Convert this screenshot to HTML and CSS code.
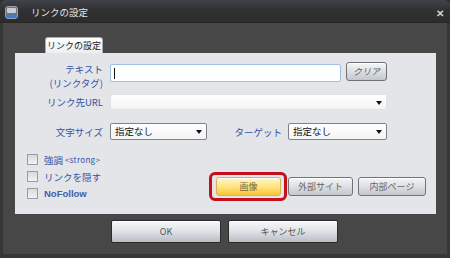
FILE: index.html
```html
<!DOCTYPE html>
<html lang="ja">
  <head>
    <meta charset="UTF-8" />
    <title>リンクの設定</title>
    <link rel="stylesheet" href="styles.css">
  </head>
  <body>
    <div class="dialog">
      <div class="titlebar">
        <svg class="app-icon" width="13" height="13" viewBox="0 0 13 13">
          <rect x="0.5" y="0.5" width="12" height="12" rx="2.5" fill="#6d737b" stroke="#9aa0a8" />
          <rect x="2" y="2" width="9" height="5" rx="1" fill="#c9ced4" />
          <path d="M1 9.5 Q6.5 7 12 9.5 L12 11 Q12 12 11 12 L2 12 Q1 12 1 11 Z" fill="#3b7fd1" />
        </svg>
        <span class="title">リンクの設定</span>
        <span class="close">&#x2715;</span>
      </div>
      <div class="dialog-body">
        <div class="tabs">
          <div class="tab">リンクの設定</div>
        </div>
        <div class="panel">
          <div class="row row-text">
            <label class="label label-two">テキスト<br>(リンクタグ)</label>
            <div class="input focused"><span class="caret"></span></div>
            <button class="btn btn-clear">クリア</button>
          </div>
          <div class="row row-url">
            <label class="label">リンク先URL</label>
            <div class="select select-url"><span class="arrow"></span></div>
          </div>
          <div class="row row-opts">
            <label class="label">文字サイズ</label>
            <div class="select select-small">指定なし<span class="arrow"></span></div>
            <label class="label label-target">ターゲット</label>
            <div class="select select-small select-target">指定なし<span class="arrow"></span></div>
          </div>
          <div class="bottom">
            <div class="checks">
              <div class="check"><span class="box"></span>強調<small>&lt;strong&gt;</small></div>
              <div class="check"><span class="box"></span>リンクを隠す</div>
              <div class="check check-latin"><span class="box"></span>NoFollow</div>
            </div>
            <div class="kinds">
              <div class="highlight"><button class="btn btn-kind active">画像</button></div>
              <button class="btn btn-kind">外部サイト</button>
              <button class="btn btn-kind btn-page">内部ページ</button>
            </div>
          </div>
        </div>
        <div class="actions">
          <button class="btn-big">OK</button>
          <button class="btn-big">キャンセル</button>
        </div>
      </div>
    </div>
  </body>
</html>
```

FILE: styles.css
```css
body {
  margin: 0;
  background-color: #2e2e2e;
  font-family: "Noto Sans CJK JP", "Noto Sans", sans-serif;
  font-size: 10px;
}
.dialog {
  width: 450px;
  height: 258px;
  box-sizing: border-box;
  background-color: #474747;
  border: 3px solid #373737;
  border-top: none;
  border-bottom-width: 4px;
  border-radius: 6px 6px 0 0;
  display: flex;
  flex-direction: column;
}
.titlebar {
  height: 22px;
  margin: 0 -3px;
  padding: 0 6px 0 5px;
  display: flex;
  align-items: center;
  background: linear-gradient(#40434a, #303133 45%, #2c2c2c);
  border-radius: 6px 6px 0 0;
  border-bottom: 1px solid #262626;
}
.app-icon {
  display: block;
  margin-top: 2px;
}
.title {
  margin-left: 13px;
  margin-top: 2px;
  color: #e4e4e4;
  font-size: 9.5px;
  line-height: 22px;
}
.close {
  margin-left: auto;
  margin-top: 2px;
  color: #cfd3d8;
  font-size: 10px;
  font-weight: bold;
}
.dialog-body {
  flex: 1;
  padding: 14px 6px 0 12px;
  display: flex;
  flex-direction: column;
}
.tabs {
  display: flex;
  padding-left: 30px;
}
.tab {
  width: 58px;
  height: 16px;
  box-sizing: border-box;
  padding-top: 1px;
  text-align: center;
  white-space: nowrap;
  color: #222;
  font-size: 9px;
  line-height: 14px;
  background: linear-gradient(#ffffff, #eceef0);
  border: 1px solid #a8acb2;
  border-bottom: none;
  border-radius: 3px 3px 0 0;
}
.panel {
  width: 421px;
  height: 161px;
  box-sizing: border-box;
  padding: 9px 10px 0 0;
  background-color: #e3e5e8;
}
.row {
  display: flex;
  align-items: center;
}
.label {
  width: 88px;
  text-align: right;
  white-space: nowrap;
  color: #3352a6;
  font-size: 9.5px;
  line-height: 14px;
  margin-right: 7px;
}
.row-text {
  height: 26px;
  align-items: flex-start;
}
.label-two {
  margin-top: 0;
  line-height: 14px;
}
.input {
  width: 231px;
  height: 18px;
  margin-top: 2px;
  box-sizing: border-box;
  background-color: #fff;
  border: 1px solid #c8d0da;
  border-radius: 2px;
}
.input.focused {
  border-color: #9fbddc;
}
.caret {
  display: block;
  width: 1px;
  height: 11px;
  margin: 3px 0 0 3px;
  background-color: #111;
}
.btn {
  font-family: inherit;
  font-size: 9px;
  color: #666;
  height: 19px;
  padding: 0;
  white-space: nowrap;
  background: linear-gradient(#f4f5f7, #dadde2 55%, #c3c8ce);
  border: 1px solid #6f7378;
  border-radius: 3px;
  box-shadow: inset 0 1px 0 #fff;
}
.btn-clear {
  width: 41px;
  margin-left: 5px;
  color: #59606a;
  font-style: italic;
}
.row-url {
  margin-top: 6px;
  height: 16px;
}
.select {
  position: relative;
  height: 17px;
  box-sizing: border-box;
  padding-left: 4px;
  background: linear-gradient(#ffffff, #f4f4f4);
  border: 1px solid #b5b8bd;
  border-radius: 2px;
  color: #111;
  font-size: 9.5px;
  line-height: 15px;
}
.select-url {
  width: 277px;
  height: 16px;
  border-color: #e0e2e5;
}
.arrow {
  position: absolute;
  right: 4px;
  top: 6px;
  border-left: 3px solid transparent;
  border-right: 3px solid transparent;
  border-top: 4px solid #111;
}
.row-opts {
  margin-top: 13px;
}
.select-small {
  width: 97px;
  border-color: #7f8389;
}
.label-target {
  width: 75px;
  margin-right: 6px;
}
.select-target {
  width: 99px;
}
.bottom {
  display: flex;
  justify-content: space-between;
  align-items: flex-end;
  margin-top: 14px;
}
.checks {
  display: flex;
  flex-direction: column;
  gap: 6px;
  padding-left: 12px;
}
.check {
  display: flex;
  align-items: center;
  height: 11px;
  color: #3352a6;
  font-size: 9.5px;
}
.check small {
  font-size: 8px;
  margin-left: 2px;
  letter-spacing: 0.3px;
}
.check-latin {
  font-family: "Liberation Sans", sans-serif;
  font-size: 9.5px;
  font-weight: bold;
  color: #4060b0;
}
.box {
  width: 9px;
  height: 9px;
  margin-right: 6px;
  background: linear-gradient(#d8d9db, #f3f3f4);
  border: 1px solid #9a9ca0;
}
.kinds {
  display: flex;
  align-items: center;
  margin-bottom: -2px;
}
.btn-kind {
  width: 65px;
}
.btn-page {
  width: 68px;
  margin-left: 5px;
}
.highlight {
  padding: 2px 3px 2px 4px;
  margin-right: 1px;
  border: 3px solid #c50f1b;
  border-radius: 6px;
}
.btn.active {
  color: #7a6a3a;
  background: linear-gradient(#fff7cf, #ffe27a 55%, #f7c43a);
  border-color: #d5b35a;
  box-shadow: inset 0 1px 0 #fffbe6;
}
.actions {
  display: flex;
  gap: 7px;
  padding: 6px 0 0 96px;
}
.btn-big {
  width: 110px;
  height: 23px;
  padding: 0;
  font-family: inherit;
  font-size: 9px;
  color: #555;
  background: linear-gradient(#f6f7f8, #e2e4e8 45%, #b9bec5);
  border: 1px solid #2a2a2a;
  border-radius: 2px;
  box-shadow: inset 0 1px 0 #fff;
}
```
